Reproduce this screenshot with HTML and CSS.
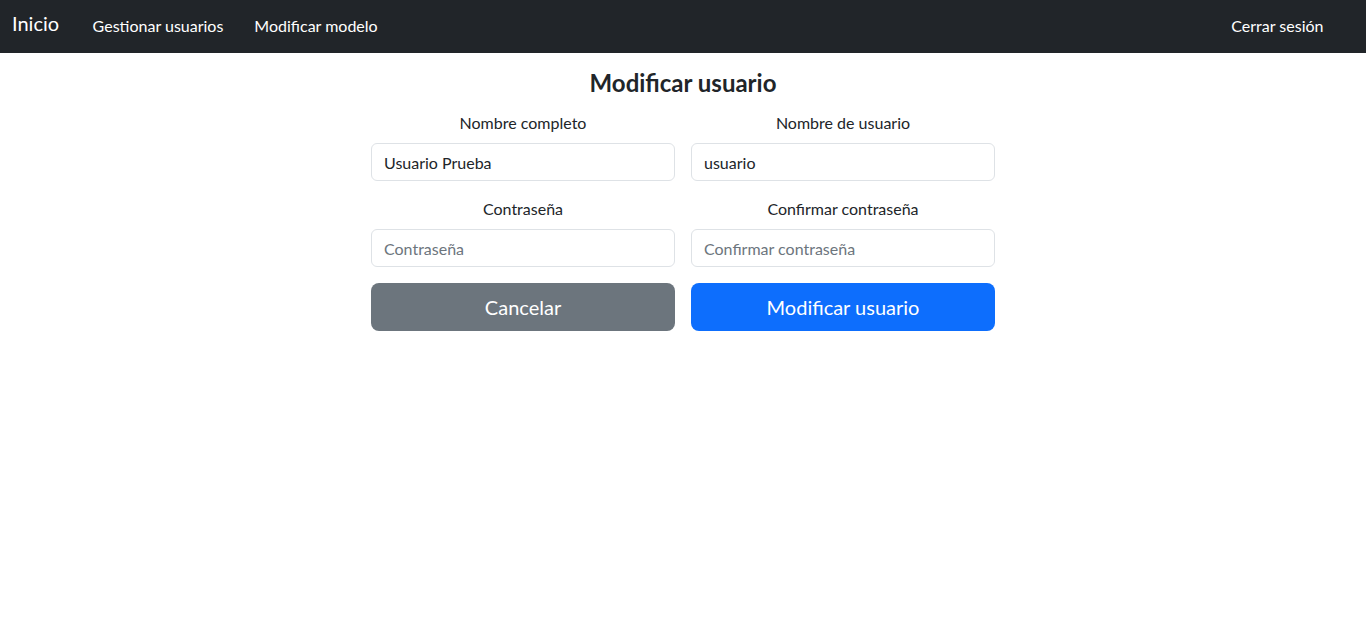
FILE: index.html
```html
<!DOCTYPE html>
<html lang="es">
<head>
<meta charset="utf-8">
<title>Modificar usuario</title>
<link rel="stylesheet" href="styles.css">
</head>
<body>
<nav class="navbar">
  <a class="brand" href="#">Inicio</a>
  <ul class="nav-links">
    <li><a class="nav-link" href="#">Gestionar usuarios</a></li>
    <li><a class="nav-link" href="#">Modificar modelo</a></li>
  </ul>
  <a class="nav-link logout" href="#">Cerrar sesión</a>
</nav>
<main class="page">
  <h3 class="title">Modificar usuario</h3>
  <form class="form-grid">
    <div class="field">
      <label class="label" for="nombre">Nombre completo</label>
      <input class="input" id="nombre" type="text" value="Usuario Prueba">
    </div>
    <div class="field">
      <label class="label" for="usuario">Nombre de usuario</label>
      <input class="input" id="usuario" type="text" value="usuario">
    </div>
    <div class="field">
      <label class="label" for="pass">Contraseña</label>
      <input class="input" id="pass" type="password" placeholder="Contraseña">
    </div>
    <div class="field">
      <label class="label" for="pass2">Confirmar contraseña</label>
      <input class="input" id="pass2" type="password" placeholder="Confirmar contraseña">
    </div>
    <button class="btn btn-secondary" type="button">Cancelar</button>
    <button class="btn btn-primary" type="submit">Modificar usuario</button>
  </form>
</main>
</body>
</html>
```
FILE: styles.css
```css
* { box-sizing: border-box; }
html, body { margin: 0; padding: 0; }
body {
  font-family: "Lato", "Noto Sans", sans-serif;
  font-size: 16px;
  color: #212529;
  background: #fff;
}
.navbar {
  height: 53px;
  background: #212529;
  display: flex;
  align-items: center;
  padding: 0 12px;
}
.brand {
  color: #fff;
  font-size: 20px;
  text-decoration: none;
  padding-bottom: 8px;
  margin-right: 18px;
}
.nav-links {
  list-style: none;
  margin: 0;
  padding: 0 0 2px;
  display: flex;
}
.nav-link {
  color: #fff;
  text-decoration: none;
  font-size: 16px;
  padding: 0 15.5px;
  display: block;
}
.logout {
  margin-left: auto;
  margin-right: 15px;
  padding-bottom: 2px;
}
.page {
  width: 624px;
  margin: 0 auto;
}
.title {
  margin: 15px 0 14px;
  text-align: center;
  font-size: 24px;
  font-weight: 700;
  line-height: 29px;
}
.form-grid {
  display: grid;
  grid-template-columns: 304px 304px;
  column-gap: 16px;
  row-gap: 16px;
}
.field {
  display: flex;
  flex-direction: column;
}
.label {
  text-align: center;
  line-height: 24px;
  margin-bottom: 8px;
}
.input {
  height: 38px;
  border: 1px solid #dee2e6;
  border-radius: 6px;
  padding: 6px 12px;
  font: inherit;
  color: #212529;
  background: #fff;
}
.input::placeholder { color: #6c757d; opacity: 1; }
.btn {
  height: 48px;
  border: none;
  border-radius: 8px;
  font: inherit;
  font-size: 20px;
  color: #fff;
  cursor: pointer;
}
.btn-secondary { background: #6c757d; }
.btn-primary { background: #0d6efd; }
```
